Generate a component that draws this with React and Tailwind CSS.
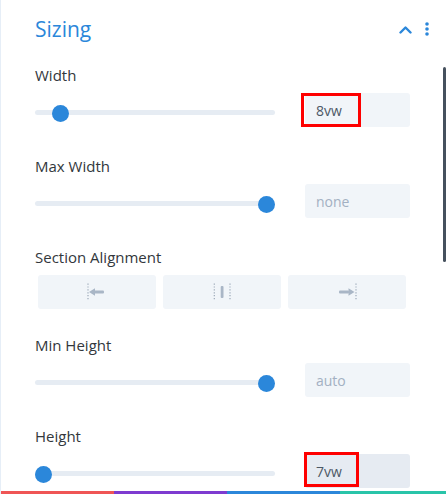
const sliders = {
  width: { label: 'Width', thumb: 17, value: '8vw', muted: false, mark: 'w' },
  maxWidth: { label: 'Max Width', thumb: 223, value: 'none', muted: true },
  minHeight: { label: 'Min Height', thumb: 223, value: 'auto', muted: true },
  height: { label: 'Height', thumb: 0, value: '7vw', muted: false, mark: 'h' },
};

function Label({ children }) {
  return <div className="text-[15px] leading-[20px] text-[#32373c]">{children}</div>;
}

function SliderRow({ item }) {
  return (
    <div className="mt-[8px] flex items-center">
      <div className="relative flex h-[34px] w-[240px] items-center pt-[4px]">
        <div className="h-[5px] w-full rounded-full bg-[#e6ecf3]" />
        <div
          className="absolute top-[12px] h-[17px] w-[17px] rounded-full bg-[#2b87da]"
          style={{ left: item.thumb }}
        />
      </div>
      <div
        className={
          'relative ml-[30px] flex h-[34px] w-[105px] items-center rounded-[3px] pl-[11px] text-[14px] ' +
          (item.mark === 'h' ? 'bg-[#e6ebf2] ' : 'bg-[#f1f5f9] ') +
          (item.muted ? 'text-[#a3b0c2]' : 'text-[#4c5866]')
        }
      >
        {item.value}
        {item.mark === 'w' && (
          <div className="absolute left-[-4px] top-0 h-[34px] w-[60px] border-[3px] border-[#fe0000]" />
        )}
        {item.mark === 'h' && (
          <div className="absolute left-[-1px] top-[-2px] h-[35px] w-[55px] border-[3px] border-[#fe0000]" />
        )}
      </div>
    </div>
  );
}

function Dotted({ x }) {
  return <line x1={x} y1="0.5" x2={x} y2="18" stroke="#9ba8b7" strokeWidth="1.2" strokeDasharray="1.2 1.7" />;
}

function AlignLeft() {
  return (
    <svg width="18" height="18" viewBox="0 0 18 18" className="translate-x-[-1px]">
      <Dotted x={1} />
      <polygon points="2,9 8,5.3 8,12.7" fill="#a9b6c6" />
      <rect x="7" y="7.5" width="10" height="3" rx="1" fill="#a9b6c6" />
    </svg>
  );
}

function AlignCenter() {
  return (
    <svg width="18" height="18" viewBox="0 0 18 18">
      <Dotted x={1.3} />
      <rect x="7.7" y="3" width="2.8" height="12" rx="1" fill="#a9b6c6" />
      <Dotted x={17} />
    </svg>
  );
}

function AlignRight() {
  return (
    <svg width="18" height="18" viewBox="0 0 18 18" className="translate-x-[1px]">
      <rect x="0" y="7.5" width="10" height="3" rx="1" fill="#a9b6c6" />
      <polygon points="15.5,9 9.5,5.3 9.5,12.7" fill="#a9b6c6" />
      <Dotted x={17} />
    </svg>
  );
}

export default function App() {
  return (
    <div
      className="relative flex h-[494px] w-[446px] flex-col overflow-hidden border-l border-[#e6eef7] bg-white"
      style={{ fontFamily: '"Open Sans", sans-serif' }}
    >
      <div className="flex-1 overflow-hidden pl-[34px]">
        {/* header */}
        <div className="flex h-[28px] items-center pt-0 mt-[15px]">
          <h2 className="text-[21px] leading-[28px] text-[#2b87da]">Sizing</h2>
          <div className="ml-auto mr-[17px] flex items-center gap-[13px]">
            <svg width="13" height="9" viewBox="0 0 13 9">
              <path d="M1.5 7.5 L6.5 2.5 L11.5 7.5" fill="none" stroke="#2b87da" strokeWidth="2.4" strokeLinecap="round" strokeLinejoin="round" />
            </svg>
            <svg width="4" height="14" viewBox="0 0 4 14">
              <circle cx="2" cy="2" r="1.8" fill="#2b87da" />
              <circle cx="2" cy="7" r="1.8" fill="#2b87da" />
              <circle cx="2" cy="12" r="1.8" fill="#2b87da" />
            </svg>
          </div>
        </div>

        <div className="mt-[22px]">
          <Label>{sliders.width.label}</Label>
          <SliderRow item={sliders.width} />
        </div>

        <div className="mt-[29px]">
          <Label>{sliders.maxWidth.label}</Label>
          <SliderRow item={sliders.maxWidth} />
        </div>

        <div className="mt-[29px]">
          <Label>Section Alignment</Label>
          <div className="ml-[3px] mt-[8px] grid w-[368px] grid-cols-3 gap-[7px]">
            <button className="flex h-[34px] items-center justify-center rounded-[3px] bg-[#f1f5f9]">
              <AlignLeft />
            </button>
            <button className="flex h-[34px] items-center justify-center rounded-[3px] bg-[#f1f5f9]">
              <AlignCenter />
            </button>
            <button className="flex h-[34px] items-center justify-center rounded-[3px] bg-[#f1f5f9]">
              <AlignRight />
            </button>
          </div>
        </div>

        <div className="mt-[26px]">
          <Label>{sliders.minHeight.label}</Label>
          <SliderRow item={sliders.minHeight} />
        </div>

        <div className="mt-[29px]">
          <Label>{sliders.height.label}</Label>
          <SliderRow item={sliders.height} />
        </div>
      </div>

      {/* scrollbar */}
      <div className="absolute right-0 top-[67px] h-[195px] w-[3px] rounded-sm bg-[#46515e]" />

      <div className="flex h-[3px]">
        <div className="w-[113px] bg-[#ef5555]" />
        <div className="w-[113px] bg-[#7e3bd0]" />
        <div className="w-[113px] bg-[#2b87da]" />
        <div className="flex-1 bg-[#29c4a9]" />
      </div>
    </div>
  );
}
